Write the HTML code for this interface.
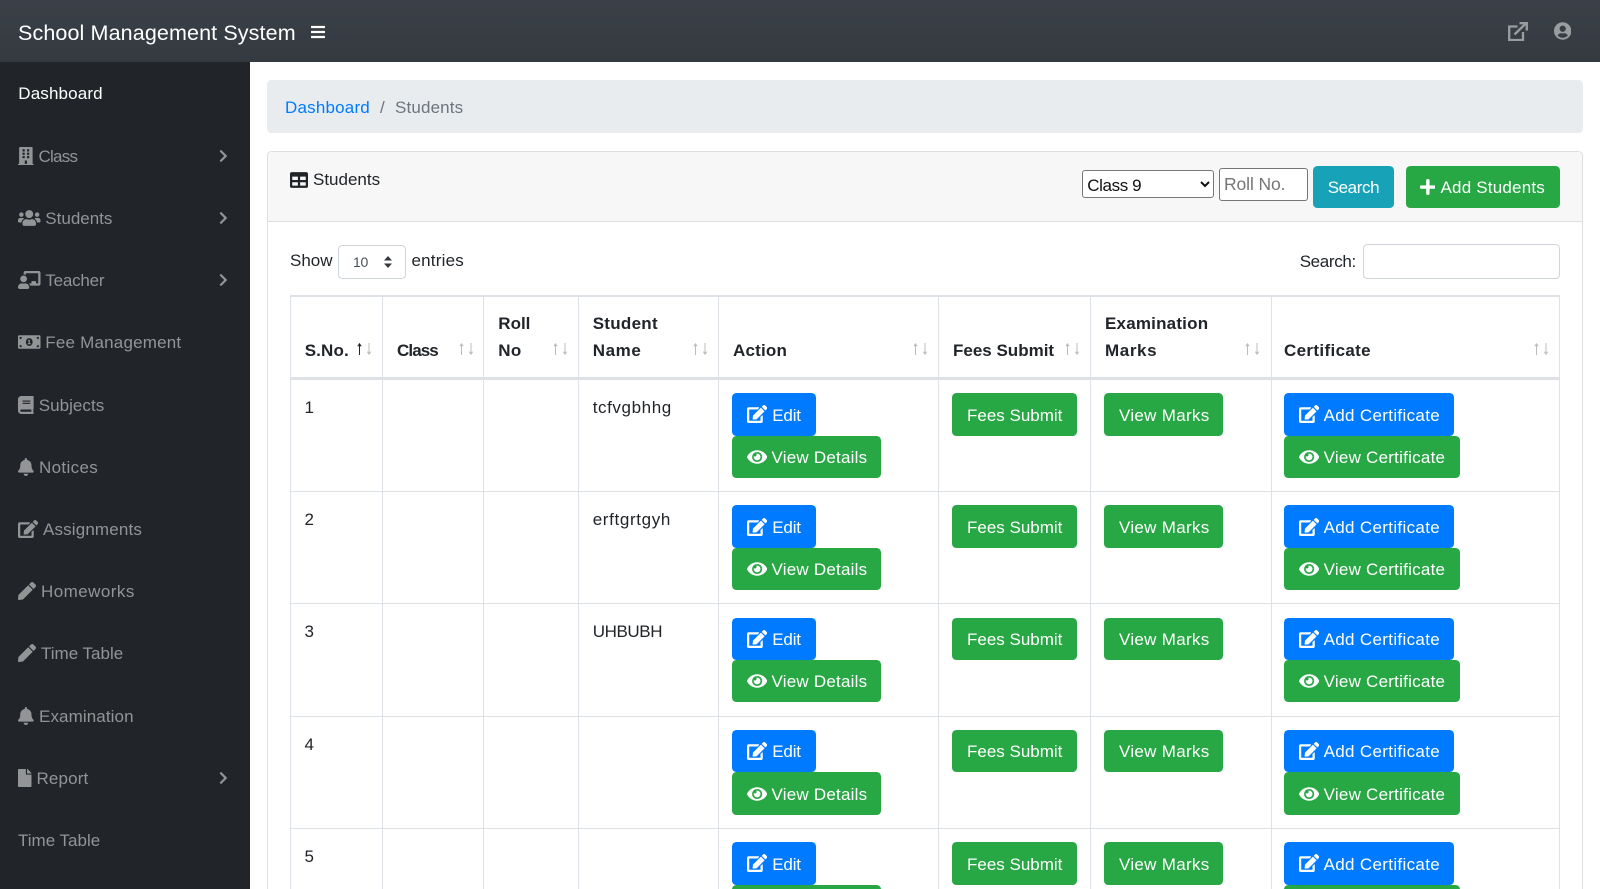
<!DOCTYPE html>
<html lang="en">
<head>
<meta charset="utf-8">
<title>School Management System</title>
<style>
*{box-sizing:border-box}
html,body{margin:0;padding:0;width:1600px;height:889px;overflow:hidden;background:#fff}
body{position:relative;font-family:"Liberation Sans",sans-serif;font-size:17px;line-height:20px;color:#212529}
a{text-decoration:none;color:inherit}
svg{fill:currentColor;display:block}
.abs,.t{position:absolute;white-space:nowrap}
.topbar{position:absolute;left:0;top:0;width:1600px;height:62px;background:linear-gradient(#3b4048,#343a40)}
.side{position:absolute;left:0;top:62px;width:250px;height:827px;background:#212529;color:#929496}
.side a{position:absolute;left:0;width:250px;height:40px}
.side svg{position:absolute;height:18px;left:18px;top:11px}
.side svg.ch{left:219.200px;top:13px;width:8.750px;height:14px}
.side span{position:absolute;top:11px;white-space:nowrap}
.crumb{position:absolute;left:267px;top:80px;width:1316px;height:53px;background:#e9ecef;border-radius:4.4px}
.card{position:absolute;left:267px;top:151px;width:1316px;height:738px;border:1px solid #dfdfdf;border-bottom:0;border-radius:4.4px 4.4px 0 0;background:#fff}
.cardh{position:absolute;left:268px;top:152px;width:1314px;height:70px;background:#f7f7f7;border-bottom:1px solid #dfdfdf;border-radius:4px 4px 0 0}
.btn{position:absolute;border-radius:4.4px;color:#fff}
.g{background:#28a745}.bl{background:#007bff}.c{background:#17a2b8}
select.nat{position:absolute;left:1082.3px;top:170px;width:131.7px;height:28px;font:17px "Liberation Sans",sans-serif;letter-spacing:-.4px;color:#111;background:#fff;border:1px solid #767676;border-radius:3px;padding:2px 0 0}
input.nat{position:absolute;left:1219px;top:167.700px;width:89px;height:33.300px;font:17.5px "Liberation Sans",sans-serif;letter-spacing:-.1px;background:#fff;border:1px solid #767676;border-radius:3px;padding:0 4px}
input.nat::placeholder{color:#757575;opacity:1}
.formc{position:absolute;border:1px solid #ced4da;border-radius:4.4px;background:#fff}
.hl{position:absolute;background:#dee2e6;left:290px;width:1270px}
.vl{position:absolute;background:#dee2e6;top:295px;height:594px;width:1px}
.th{position:absolute;white-space:nowrap;font-weight:bold}
.sort{position:absolute;top:343px;width:15px;height:12px;fill:none;stroke:#212529;stroke-width:1;opacity:.3}
.row{position:absolute;left:0;width:1600px;height:112px}
.row>.t{top:18px}
.b{position:absolute;height:42.3px;border-radius:4.4px;color:#fff}
.b svg{position:absolute;left:14.4px;top:12.2px;width:20.25px;height:18px}
.b span{position:absolute;top:12.4px;white-space:nowrap}
.edit{left:732.3px;top:13.3px;width:83.4px;background:#007bff}
.edit span{left:40px;letter-spacing:-.2px}
.det{left:732.3px;top:55.7px;width:148.7px;background:#28a745}
.det span{left:39.2px;letter-spacing:.22px}
.fee{left:952.3px;top:13.3px;width:124.4px;background:#28a745}
.fee span{left:14.7px}
.mar{left:1104.3px;top:13.3px;width:119px;background:#28a745}
.mar span{left:14.7px;letter-spacing:.3px}
.adc{left:1284.3px;top:13.3px;width:170px;background:#007bff}
.adc span{left:39.3px;letter-spacing:.33px}
.vic{left:1284.3px;top:55.7px;width:176px;background:#28a745}
.vic span{left:39.3px;letter-spacing:.24px}
</style>
</head>
<body>
<svg width="0" height="0" style="position:absolute">
<defs>
<symbol id="edit" viewBox="0 0 576 512"><path d="M402.6 83.2l90.2 90.2c3.8 3.8 3.8 10 0 13.8L274.4 405.6l-92.8 10.3c-12.4 1.4-22.9-9.1-21.5-21.5l10.3-92.8L388.8 83.2c3.8-3.8 10-3.8 13.8 0zm162-22.9l-48.8-48.8c-15.2-15.2-39.9-15.2-55.2 0l-35.4 35.4c-3.8 3.8-3.8 10 0 13.8l90.2 90.2c3.8 3.8 10 3.8 13.8 0l35.4-35.4c15.2-15.3 15.2-40 0-55.2zM384 346.2V448H64V128h229.8c3.2 0 6.2-1.3 8.5-3.5l40-40c7.6-7.6 2.2-20.5-8.5-20.5H48C21.5 64 0 85.5 0 112v352c0 26.5 21.5 48 48 48h352c26.5 0 48-21.5 48-48V306.2c0-10.7-12.9-16-20.5-8.5l-40 40c-2.2 2.3-3.5 5.3-3.5 8.5z"/></symbol>
<symbol id="eye" viewBox="0 0 576 512"><path d="M572.52 241.4C518.29 135.59 410.93 64 288 64S57.68 135.64 3.48 241.41a32.35 32.35 0 0 0 0 29.19C57.71 376.41 165.07 448 288 448s230.32-71.64 284.52-177.41a32.35 32.35 0 0 0 0-29.19zM288 400a144 144 0 1 1 144-144 143.93 143.93 0 0 1-144 144zm0-240a95.31 95.31 0 0 0-25.31 3.79 47.85 47.85 0 0 1-66.9 66.9A95.78 95.78 0 1 0 288 160z"/></symbol>
<symbol id="plus" viewBox="0 0 448 512"><path d="M416 208H272V64c0-17.67-14.33-32-32-32h-32c-17.67 0-32 14.33-32 32v144H32c-17.67 0-32 14.33-32 32v32c0 17.67 14.33 32 32 32h144v144c0 17.67 14.33 32 32 32h32c17.67 0 32-14.33 32-32V304h144c17.67 0 32-14.33 32-32v-32c0-17.67-14.33-32-32-32z"/></symbol>
<symbol id="bars" viewBox="0 0 448 512"><path d="M16 132h416c8.837 0 16-7.163 16-16V76c0-8.837-7.163-16-16-16H16C7.163 60 0 67.163 0 76v40c0 8.837 7.163 16 16 16zm0 160h416c8.837 0 16-7.163 16-16v-40c0-8.837-7.163-16-16-16H16c-8.837 0-16 7.163-16 16v40c0 8.837 7.163 16 16 16zm0 160h416c8.837 0 16-7.163 16-16v-40c0-8.837-7.163-16-16-16H16c-8.837 0-16 7.163-16 16v40c0 8.837 7.163 16 16 16z"/></symbol>
<symbol id="chev" viewBox="0 0 320 512"><path d="M285.476 272.971L91.132 467.314c-9.373 9.373-24.569 9.373-33.941 0l-22.667-22.667c-9.357-9.357-9.375-24.522-.04-33.901L188.505 256 34.484 101.255c-9.335-9.379-9.317-24.544.04-33.901l22.667-22.667c9.373-9.373 24.569-9.373 33.941 0L285.475 239.03c9.373 9.372 9.373 24.568.001 33.941z"/></symbol>
<symbol id="table" viewBox="0 0 512 512"><path d="M464 32H48C21.49 32 0 53.49 0 80v352c0 26.51 21.49 48 48 48h416c26.51 0 48-21.49 48-48V80c0-26.51-21.49-48-48-48zM224 416H64v-96h160v96zm0-160H64v-96h160v96zm224 160H288v-96h160v96zm0-160H288v-96h160v96z"/></symbol>
<symbol id="bell" viewBox="0 0 448 512"><path d="M224 512c35.32 0 63.97-28.65 63.97-64H160.03c0 35.35 28.65 64 63.97 64zm215.39-149.71c-19.32-20.76-55.47-51.99-55.47-154.29 0-77.7-54.48-139.9-127.94-155.16V32c0-17.67-14.32-32-31.98-32s-31.98 14.33-31.98 32v20.84C118.56 68.1 64.08 130.3 64.08 208c0 102.3-36.15 133.53-55.47 154.29-6 6.45-8.66 14.16-8.61 21.71.11 16.4 12.98 32 32.1 32h383.8c19.12 0 32-15.6 32.1-32 .05-7.55-2.61-15.27-8.61-21.71z"/></symbol>
<symbol id="pen" viewBox="0 0 512 512"><path d="M290.74 93.24l128.02 128.02-277.99 277.99-114.14 12.6C11.35 513.54-1.56 500.62.14 485.34l12.7-114.22 277.9-277.88zm207.2-19.06l-60.11-60.11c-18.75-18.75-49.16-18.75-67.91 0l-56.55 56.55 128.02 128.02 56.55-56.55c18.75-18.76 18.75-49.16 0-67.91z"/></symbol>
<symbol id="file" viewBox="0 0 384 512"><path d="M224 136V0H24C10.7 0 0 10.7 0 24v464c0 13.3 10.7 24 24 24h336c13.3 0 24-10.7 24-24V160H248c-13.2 0-24-10.8-24-24zm160-14.1v6.1H256V0h6.1c6.4 0 12.5 2.5 17 7l97.9 98c4.5 4.5 7 10.6 7 16.9z"/></symbol>
<symbol id="user" viewBox="0 0 496 512"><path d="M248 8C111 8 0 119 0 256s111 248 248 248 248-111 248-248S385 8 248 8zm0 96c48.6 0 88 39.4 88 88s-39.4 88-88 88-88-39.4-88-88 39.4-88 88-88zm0 344c-58.7 0-111.3-26.6-146.5-68.2 18.8-35.4 55.6-59.8 98.5-59.8 2.4 0 4.8.4 7.1 1.1 13 4.2 26.6 6.9 40.9 6.9 14.3 0 28-2.7 40.9-6.9 2.3-.7 4.7-1.1 7.1-1.1 42.9 0 79.7 24.4 98.5 59.8C359.3 421.4 306.7 448 248 448z"/></symbol>
<symbol id="building" viewBox="0 0 448 512"><path d="M436 480h-20V24c0-13.255-10.745-24-24-24H56C42.745 0 32 10.745 32 24v456H12c-6.627 0-12 5.373-12 12v20h448v-20c0-6.627-5.373-12-12-12zM128 76c0-6.627 5.373-12 12-12h40c6.627 0 12 5.373 12 12v40c0 6.627-5.373 12-12 12h-40c-6.627 0-12-5.373-12-12V76zm0 96c0-6.627 5.373-12 12-12h40c6.627 0 12 5.373 12 12v40c0 6.627-5.373 12-12 12h-40c-6.627 0-12-5.373-12-12v-40zm52 148h-40c-6.627 0-12-5.373-12-12v-40c0-6.627 5.373-12 12-12h40c6.627 0 12 5.373 12 12v40c0 6.627-5.373 12-12 12zm76 160h-64v-84c0-6.627 5.373-12 12-12h40c6.627 0 12 5.373 12 12v84zm64-172c0 6.627-5.373 12-12 12h-40c-6.627 0-12-5.373-12-12v-40c0-6.627 5.373-12 12-12h40c6.627 0 12 5.373 12 12v40zm0-96c0 6.627-5.373 12-12 12h-40c-6.627 0-12-5.373-12-12v-40c0-6.627 5.373-12 12-12h40c6.627 0 12 5.373 12 12v40zm0-96c0 6.627-5.373 12-12 12h-40c-6.627 0-12-5.373-12-12V76c0-6.627 5.373-12 12-12h40c6.627 0 12 5.373 12 12v40z"/></symbol>
<symbol id="users" viewBox="0 0 640 512"><path d="M96 224c35.3 0 64-28.7 64-64s-28.7-64-64-64-64 28.7-64 64 28.7 64 64 64zm448 0c35.3 0 64-28.7 64-64s-28.7-64-64-64-64 28.7-64 64 28.7 64 64 64zm32 32h-64c-17.6 0-33.5 7.1-45.1 18.6 40.3 22.1 68.9 62 75.1 109.4h66c17.7 0 32-14.3 32-32v-32c0-35.3-28.7-64-64-64zm-256 0c61.9 0 112-50.1 112-112S381.9 32 320 32 208 82.1 208 144s50.1 112 112 112zm76.8 32h-8.3c-20.8 10-43.9 16-68.5 16s-47.6-6-68.5-16h-8.3C179.6 288 128 339.6 128 403.2V432c0 26.5 21.5 48 48 48h288c26.5 0 48-21.5 48-48v-28.8c0-63.6-51.6-115.2-115.2-115.2zm-223.7-13.4C161.5 263.1 145.6 256 128 256H64c-35.3 0-64 28.7-64 64v32c0 17.7 14.3 32 32 32h65.9c6.3-47.4 34.9-87.3 75.2-109.4z"/></symbol>
<symbol id="teacher" viewBox="0 0 640 512"><path d="M208 352c-2.39 0-4.78.35-7.06 1.09C187.98 357.3 174.35 360 160 360c-14.35 0-27.98-2.7-40.95-6.91-2.28-.74-4.66-1.09-7.05-1.09C49.94 352-.33 402.48 0 464.62.14 490.88 21.73 512 48 512h224c26.27 0 47.86-21.12 48-47.38.33-62.14-49.94-112.62-112-112.62zm-48-32c53.02 0 96-42.98 96-96s-42.98-96-96-96-96 42.98-96 96 42.98 96 96 96zM592 0H208c-26.47 0-48 22.25-48 49.59V96c23.42 0 45.1 6.78 64 17.8V64h352v288h-64v-64H384v64h-76.24c19.1 16.69 33.12 38.73 39.69 64H592c26.47 0 48-22.25 48-49.59V49.59C640 22.25 618.47 0 592 0z"/></symbol>
<symbol id="money" viewBox="0 0 640 512"><path d="M352 288h-16v-88c0-4.42-3.58-8-8-8h-13.58c-4.74 0-9.37 1.4-13.31 4.03l-15.33 10.22a7.994 7.994 0 0 0-2.22 11.09l8.88 13.31a7.994 7.994 0 0 0 11.09 2.22l.47-.31V288h-16c-4.42 0-8 3.58-8 8v16c0 4.42 3.58 8 8 8h64c4.42 0 8-3.58 8-8v-16c0-4.42-3.58-8-8-8zM608 64H32C14.33 64 0 78.33 0 96v320c0 17.67 14.33 32 32 32h576c17.67 0 32-14.33 32-32V96c0-17.67-14.33-32-32-32zM48 400v-64c35.35 0 64 28.65 64 64H48zm0-224v-64h64c0 35.35-28.65 64-64 64zm272 192c-53.02 0-96-50.15-96-112 0-61.86 42.98-112 96-112s96 50.14 96 112c0 61.87-43 112-96 112zm272 32h-64c0-35.35 28.65-64 64-64v64zm0-224c-35.35 0-64-28.65-64-64h64v64z"/></symbol>
<symbol id="book" viewBox="0 0 448 512"><path d="M448 360V24c0-13.3-10.7-24-24-24H96C43 0 0 43 0 96v320c0 53 43 96 96 96h328c13.3 0 24-10.7 24-24v-16c0-7.5-3.5-14.3-8.9-18.7-4.2-15.4-4.2-59.3 0-74.7 5.4-4.3 8.9-11.1 8.9-18.6zM128 134c0-3.3 2.7-6 6-6h212c3.3 0 6 2.7 6 6v20c0 3.3-2.7 6-6 6H134c-3.3 0-6-2.7-6-6v-20zm0 64c0-3.3 2.7-6 6-6h212c3.3 0 6 2.7 6 6v20c0 3.3-2.7 6-6 6H134c-3.3 0-6-2.7-6-6v-20zm253.4 250H96c-17.7 0-32-14.3-32-32 0-17.6 14.4-32 32-32h285.4c-1.9 17.1-1.9 46.9 0 64z"/></symbol>
<symbol id="sort" viewBox="0 0 15 12"><path d="M2.5 12V1M.8 3.3 2.5 .8l1.7 2.5M12 0v11M10.3 8.7 12 11.2l1.7-2.5"/></symbol>
</defs>
</svg>

<header class="topbar">
  <a class="t" style="left:18px;top:22px;font-size:21.5px;line-height:22px;letter-spacing:.12px;color:#fff">School Management System</a>
  <svg class="abs" style="left:310.7px;top:24.1px;width:14px;height:16px;color:#fff"><use href="#bars"/></svg>
  <svg class="abs" viewBox="0 0 20 19" style="left:1507.7px;top:22px;width:20px;height:19px;fill:none;stroke:#9a9da0;stroke-width:2.300"><path d="M9.500 4.500H1.200V18H15V10M6.500 12.500 17.500 1.800M11.500 1.200H18.800V8.500"/></svg>
  <svg class="abs" style="left:1554px;top:22.400px;width:17.4px;height:18px;color:#9a9da0"><use href="#user"/></svg>
</header>

<nav class="side">
  <a style="top:10.5px;color:#fff"><span style="left:18.3px;letter-spacing:.14px">Dashboard</span></a>
  <a style="top:74px"><svg style="width:15.75px"><use href="#building"/></svg><span style="left:38.5px;letter-spacing:-.75px">Class</span><svg class="ch"><use href="#chev"/></svg></a>
  <a style="top:136.2px"><svg style="width:22.5px"><use href="#users"/></svg><span style="left:45.3px">Students</span><svg class="ch"><use href="#chev"/></svg></a>
  <a style="top:198px"><svg style="width:22.5px"><use href="#teacher"/></svg><span style="left:45.3px;letter-spacing:-.2px">Teacher</span><svg class="ch"><use href="#chev"/></svg></a>
  <a style="top:260px"><svg style="width:22.5px"><use href="#money"/></svg><span style="left:45.3px;letter-spacing:.2px">Fee Management</span></a>
  <a style="top:323px"><svg style="width:15.75px"><use href="#book"/></svg><span style="left:38.7px;letter-spacing:.05px">Subjects</span></a>
  <a style="top:385px"><svg style="width:15.75px"><use href="#bell"/></svg><span style="left:39px;letter-spacing:.35px">Notices</span></a>
  <a style="top:447.2px"><svg style="width:20.25px"><use href="#edit"/></svg><span style="left:43px;letter-spacing:.15px">Assignments</span></a>
  <a style="top:509px"><svg style="width:18px"><use href="#pen"/></svg><span style="left:41px;letter-spacing:.45px">Homeworks</span></a>
  <a style="top:571px"><svg style="width:18px"><use href="#pen"/></svg><span style="left:41px;letter-spacing:0">Time Table</span></a>
  <a style="top:634px"><svg style="width:15.75px"><use href="#bell"/></svg><span style="left:39px;letter-spacing:.1px">Examination</span></a>
  <a style="top:696px"><svg style="width:13.5px"><use href="#file"/></svg><span style="left:36.5px;letter-spacing:.15px">Report</span><svg class="ch"><use href="#chev"/></svg></a>
  <a style="top:758px"><span style="left:18px;letter-spacing:0">Time Table</span></a>
</nav>

<div class="crumb"></div>
<a class="t" style="left:285px;top:98px;color:#007bff;letter-spacing:.2px">Dashboard</a>
<span class="t" style="left:380px;top:98px;color:#6c757d">/</span>
<span class="t" style="left:395px;top:98px;color:#6c757d;letter-spacing:.15px">Students</span>

<div class="card"></div>
<div class="cardh"></div>
<svg class="abs" style="left:290px;top:170.6px;width:18px;height:18px"><use href="#table"/></svg>
<span class="t" style="left:313px;top:170px">Students</span>
<select class="nat"><option>Class 9</option></select>
<input class="nat" placeholder="Roll No.">
<a class="btn c" style="left:1313.4px;top:165.700px;width:81px;height:42px"><span class="t" style="left:14.3px;top:12px;letter-spacing:-.4px">Search</span></a>
<a class="btn g" style="left:1405.5px;top:165.700px;width:154.5px;height:42px"><svg class="abs" style="left:14px;top:12px;width:15.75px;height:18px"><use href="#plus"/></svg><span class="t" style="left:35px;top:12px;letter-spacing:.2px">Add Students</span></a>

<span class="t" style="left:290px;top:251px">Show</span>
<div class="formc" style="left:338px;top:245px;width:68px;height:34px"></div>
<span class="t" style="left:353px;top:252px;font-size:14px;letter-spacing:-.3px;color:#495057">10</span>
<svg class="abs" viewBox="0 0 10 14" style="left:383px;top:255px;width:10px;height:14px;color:#343a40"><path d="M5 1 9 5.500H1zM5 13 1 8.500H9z"/></svg>
<span class="t" style="left:411.5px;top:251px;letter-spacing:.2px">entries</span>
<span class="t" style="left:1299.7px;top:252px;letter-spacing:-.35px">Search:</span>
<input class="formc" style="left:1363px;top:244.300px;width:197px;height:34.400px" aria-label="Search">

<div class="hl" style="top:295px;height:2px"></div>
<div class="hl" style="top:377px;height:3px"></div>
<div class="hl" style="top:491px;height:1px"></div>
<div class="hl" style="top:603px;height:1px"></div>
<div class="hl" style="top:715.500px;height:1px"></div>
<div class="hl" style="top:828px;height:1px"></div>
<div class="vl" style="left:290px"></div>
<div class="vl" style="left:382px"></div>
<div class="vl" style="left:483px"></div>
<div class="vl" style="left:578px"></div>
<div class="vl" style="left:718px"></div>
<div class="vl" style="left:938px"></div>
<div class="vl" style="left:1090px"></div>
<div class="vl" style="left:1270.500px"></div>
<div class="vl" style="left:1559px"></div>

<span class="th" style="left:304.700px;top:341px;letter-spacing:.15px">S.No.</span>
<span class="th" style="left:397px;top:341px;letter-spacing:-.9px">Class</span>
<span class="th" style="left:498.300px;top:314px">Roll</span>
<span class="th" style="left:498.300px;top:341px;letter-spacing:.3px">No</span>
<span class="th" style="left:592.700px;top:314px;letter-spacing:.28px">Student</span>
<span class="th" style="left:592.700px;top:341px;letter-spacing:.6px">Name</span>
<span class="th" style="left:733px;top:341px;letter-spacing:.2px">Action</span>
<span class="th" style="left:953px;top:341px">Fees Submit</span>
<span class="th" style="left:1105px;top:314px;letter-spacing:.2px">Examination</span>
<span class="th" style="left:1105px;top:341px;letter-spacing:.6px">Marks</span>
<span class="th" style="left:1284px;top:341px;letter-spacing:.35px">Certificate</span>

<svg class="sort" style="left:357.300px"><use href="#sort"/></svg>
<svg class="abs" viewBox="0 0 5 12" style="left:357.300px;top:343px;width:5px;height:12px;fill:none;stroke:#212529;stroke-width:1"><path d="M2.5 12V1M.8 3.3 2.5 .8l1.700 2.500"/></svg>
<svg class="sort" style="left:459px"><use href="#sort"/></svg>
<svg class="sort" style="left:553px"><use href="#sort"/></svg>
<svg class="sort" style="left:693px"><use href="#sort"/></svg>
<svg class="sort" style="left:913px"><use href="#sort"/></svg>
<svg class="sort" style="left:1065px"><use href="#sort"/></svg>
<svg class="sort" style="left:1245px"><use href="#sort"/></svg>
<svg class="sort" style="left:1534px"><use href="#sort"/></svg>

<div class="row" style="top:380px">
  <span class="t" style="left:304.500px">1</span>
  <span class="t" style="left:592.700px;letter-spacing:.6px">tcfvgbhhg</span>
  <a class="b edit"><svg><use href="#edit"/></svg><span>Edit</span></a>
  <a class="b det"><svg><use href="#eye"/></svg><span>View Details</span></a>
  <a class="b fee"><span>Fees Submit</span></a>
  <a class="b mar"><span>View Marks</span></a>
  <a class="b adc"><svg><use href="#edit"/></svg><span>Add Certificate</span></a>
  <a class="b vic"><svg><use href="#eye"/></svg><span>View Certificate</span></a>
</div>
<div class="row" style="top:492.200px">
  <span class="t" style="left:304.500px">2</span>
  <span class="t" style="left:592.700px;letter-spacing:.65px">erftgrtgyh</span>
  <a class="b edit"><svg><use href="#edit"/></svg><span>Edit</span></a>
  <a class="b det"><svg><use href="#eye"/></svg><span>View Details</span></a>
  <a class="b fee"><span>Fees Submit</span></a>
  <a class="b mar"><span>View Marks</span></a>
  <a class="b adc"><svg><use href="#edit"/></svg><span>Add Certificate</span></a>
  <a class="b vic"><svg><use href="#eye"/></svg><span>View Certificate</span></a>
</div>
<div class="row" style="top:604.400px">
  <span class="t" style="left:304.500px">3</span>
  <span class="t" style="left:592.700px;letter-spacing:-.4px">UHBUBH</span>
  <a class="b edit"><svg><use href="#edit"/></svg><span>Edit</span></a>
  <a class="b det"><svg><use href="#eye"/></svg><span>View Details</span></a>
  <a class="b fee"><span>Fees Submit</span></a>
  <a class="b mar"><span>View Marks</span></a>
  <a class="b adc"><svg><use href="#edit"/></svg><span>Add Certificate</span></a>
  <a class="b vic"><svg><use href="#eye"/></svg><span>View Certificate</span></a>
</div>
<div class="row" style="top:716.700px">
  <span class="t" style="left:304.500px">4</span>
  <a class="b edit"><svg><use href="#edit"/></svg><span>Edit</span></a>
  <a class="b det"><svg><use href="#eye"/></svg><span>View Details</span></a>
  <a class="b fee"><span>Fees Submit</span></a>
  <a class="b mar"><span>View Marks</span></a>
  <a class="b adc"><svg><use href="#edit"/></svg><span>Add Certificate</span></a>
  <a class="b vic"><svg><use href="#eye"/></svg><span>View Certificate</span></a>
</div>
<div class="row" style="top:829px;height:60px;overflow:hidden">
  <span class="t" style="left:304.500px">5</span>
  <a class="b edit"><svg><use href="#edit"/></svg><span>Edit</span></a>
  <a class="b det"><svg><use href="#eye"/></svg><span>View Details</span></a>
  <a class="b fee"><span>Fees Submit</span></a>
  <a class="b mar"><span>View Marks</span></a>
  <a class="b adc"><svg><use href="#edit"/></svg><span>Add Certificate</span></a>
  <a class="b vic"><svg><use href="#eye"/></svg><span>View Certificate</span></a>
</div>
</body>
</html>
